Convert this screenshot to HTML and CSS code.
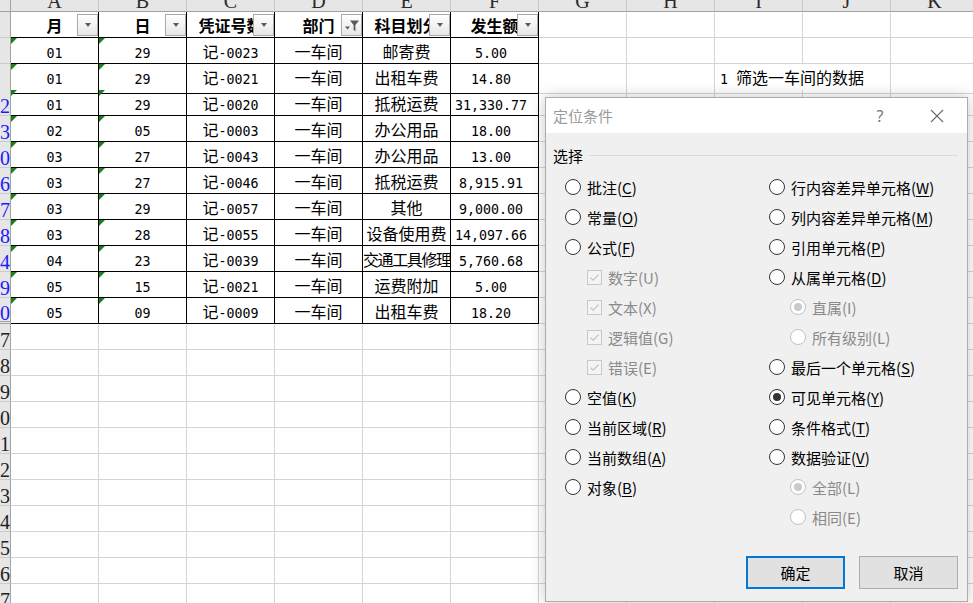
FILE: index.html
```html
<!DOCTYPE html>
<html lang="zh-CN">
<head>
<meta charset="utf-8">
<title>定位条件</title>
<link rel="stylesheet" href="styles.css">
</head>
<body>
<div class="sheet">
  <div class="row colhdr"><div></div><div>A</div><div>B</div><div>C</div><div>D</div><div>E</div><div>F</div><div>G</div><div>H</div><div>I</div><div>J</div><div>K</div></div>

  <div class="row"><div class="rh"></div>
    <div class="c t h">月<span class="dd"></span></div>
    <div class="c t h">日<span class="dd"></span></div>
    <div class="c t h">凭证号数<span class="dd"></span></div>
    <div class="c t h">部门<span class="dd f"><svg width="19" height="20" viewBox="0 0 19 20"><path d="M3 11.5h5l-2.5 3z" fill="#5a5a5a"/><path d="M8 5.5h9l-3.6 4.6v6.2l-1.8-1.3v-4.9z" fill="#5a5a5a"/></svg></span></div>
    <div class="c t h">科目划分<span class="dd"></span></div>
    <div class="c t h">发生额<span class="dd"></span></div>
    <div class="c"></div><div class="c"></div><div class="c"></div><div class="c"></div><div class="c"></div></div>

  <div class="row"><div class="rh"></div>
    <div class="c t g"><span class="n">01</span></div><div class="c t g"><span class="n">29</span></div><div class="c t">记<span class="n">-0023</span></div><div class="c t">一车间</div><div class="c t">邮寄费</div><div class="c t r"><span class="n">5.00</span></div>
    <div class="c"></div><div class="c"></div><div class="c"></div><div class="c"></div><div class="c"></div></div>

  <div class="row"><div class="rh"></div>
    <div class="c t g"><span class="n">01</span></div><div class="c t g"><span class="n">29</span></div><div class="c t">记<span class="n">-0021</span></div><div class="c t">一车间</div><div class="c t">出租车费</div><div class="c t r"><span class="n">14.80</span></div>
    <div class="c"></div><div class="c"></div><div class="c ov"><span class="n">1 </span>筛选一车间的数据</div><div class="c"></div><div class="c"></div></div>

  <div class="row"><div class="rh b">2</div>
    <div class="c t g"><span class="n">01</span></div><div class="c t g"><span class="n">29</span></div><div class="c t">记<span class="n">-0020</span></div><div class="c t">一车间</div><div class="c t">抵税运费</div><div class="c t r"><span class="n">31,330.77</span></div>
    <div class="c"></div><div class="c"></div><div class="c"></div><div class="c"></div><div class="c"></div></div>

  <div class="row"><div class="rh b">3</div>
    <div class="c t g"><span class="n">02</span></div><div class="c t g"><span class="n">05</span></div><div class="c t">记<span class="n">-0003</span></div><div class="c t">一车间</div><div class="c t">办公用品</div><div class="c t r"><span class="n">18.00</span></div>
    <div class="c"></div><div class="c"></div><div class="c"></div><div class="c"></div><div class="c"></div></div>

  <div class="row"><div class="rh b">0</div>
    <div class="c t g"><span class="n">03</span></div><div class="c t g"><span class="n">27</span></div><div class="c t">记<span class="n">-0043</span></div><div class="c t">一车间</div><div class="c t">办公用品</div><div class="c t r"><span class="n">13.00</span></div>
    <div class="c"></div><div class="c"></div><div class="c"></div><div class="c"></div><div class="c"></div></div>

  <div class="row"><div class="rh b">6</div>
    <div class="c t g"><span class="n">03</span></div><div class="c t g"><span class="n">27</span></div><div class="c t">记<span class="n">-0046</span></div><div class="c t">一车间</div><div class="c t">抵税运费</div><div class="c t r"><span class="n">8,915.91</span></div>
    <div class="c"></div><div class="c"></div><div class="c"></div><div class="c"></div><div class="c"></div></div>

  <div class="row"><div class="rh b">7</div>
    <div class="c t g"><span class="n">03</span></div><div class="c t g"><span class="n">29</span></div><div class="c t">记<span class="n">-0057</span></div><div class="c t">一车间</div><div class="c t">其他</div><div class="c t r"><span class="n">9,000.00</span></div>
    <div class="c"></div><div class="c"></div><div class="c"></div><div class="c"></div><div class="c"></div></div>

  <div class="row"><div class="rh b">8</div>
    <div class="c t g"><span class="n">03</span></div><div class="c t g"><span class="n">28</span></div><div class="c t">记<span class="n">-0055</span></div><div class="c t">一车间</div><div class="c t">设备使用费</div><div class="c t r"><span class="n">14,097.66</span></div>
    <div class="c"></div><div class="c"></div><div class="c"></div><div class="c"></div><div class="c"></div></div>

  <div class="row"><div class="rh b">4</div>
    <div class="c t g"><span class="n">04</span></div><div class="c t g"><span class="n">23</span></div><div class="c t">记<span class="n">-0039</span></div><div class="c t">一车间</div><div class="c t tight">交通工具修理</div><div class="c t r"><span class="n">5,760.68</span></div>
    <div class="c"></div><div class="c"></div><div class="c"></div><div class="c"></div><div class="c"></div></div>

  <div class="row"><div class="rh b">9</div>
    <div class="c t g"><span class="n">05</span></div><div class="c t g"><span class="n">15</span></div><div class="c t">记<span class="n">-0021</span></div><div class="c t">一车间</div><div class="c t">运费附加</div><div class="c t r"><span class="n">5.00</span></div>
    <div class="c"></div><div class="c"></div><div class="c"></div><div class="c"></div><div class="c"></div></div>

  <div class="row"><div class="rh b hid">0</div>
    <div class="c t g"><span class="n">05</span></div><div class="c t g"><span class="n">09</span></div><div class="c t">记<span class="n">-0009</span></div><div class="c t">一车间</div><div class="c t">出租车费</div><div class="c t r"><span class="n">18.20</span></div>
    <div class="c"></div><div class="c"></div><div class="c"></div><div class="c"></div><div class="c"></div></div>

  <div class="row"><div class="rh">7</div><div class="c"></div><div class="c"></div><div class="c"></div><div class="c"></div><div class="c"></div><div class="c"></div><div class="c"></div><div class="c"></div><div class="c"></div><div class="c"></div><div class="c"></div></div>
  <div class="row"><div class="rh">8</div><div class="c"></div><div class="c"></div><div class="c"></div><div class="c"></div><div class="c"></div><div class="c"></div><div class="c"></div><div class="c"></div><div class="c"></div><div class="c"></div><div class="c"></div></div>
  <div class="row"><div class="rh">9</div><div class="c"></div><div class="c"></div><div class="c"></div><div class="c"></div><div class="c"></div><div class="c"></div><div class="c"></div><div class="c"></div><div class="c"></div><div class="c"></div><div class="c"></div></div>
  <div class="row"><div class="rh">0</div><div class="c"></div><div class="c"></div><div class="c"></div><div class="c"></div><div class="c"></div><div class="c"></div><div class="c"></div><div class="c"></div><div class="c"></div><div class="c"></div><div class="c"></div></div>
  <div class="row"><div class="rh">1</div><div class="c"></div><div class="c"></div><div class="c"></div><div class="c"></div><div class="c"></div><div class="c"></div><div class="c"></div><div class="c"></div><div class="c"></div><div class="c"></div><div class="c"></div></div>
  <div class="row"><div class="rh">2</div><div class="c"></div><div class="c"></div><div class="c"></div><div class="c"></div><div class="c"></div><div class="c"></div><div class="c"></div><div class="c"></div><div class="c"></div><div class="c"></div><div class="c"></div></div>
  <div class="row"><div class="rh">3</div><div class="c"></div><div class="c"></div><div class="c"></div><div class="c"></div><div class="c"></div><div class="c"></div><div class="c"></div><div class="c"></div><div class="c"></div><div class="c"></div><div class="c"></div></div>
  <div class="row"><div class="rh">4</div><div class="c"></div><div class="c"></div><div class="c"></div><div class="c"></div><div class="c"></div><div class="c"></div><div class="c"></div><div class="c"></div><div class="c"></div><div class="c"></div><div class="c"></div></div>
  <div class="row"><div class="rh">5</div><div class="c"></div><div class="c"></div><div class="c"></div><div class="c"></div><div class="c"></div><div class="c"></div><div class="c"></div><div class="c"></div><div class="c"></div><div class="c"></div><div class="c"></div></div>
  <div class="row"><div class="rh">6</div><div class="c"></div><div class="c"></div><div class="c"></div><div class="c"></div><div class="c"></div><div class="c"></div><div class="c"></div><div class="c"></div><div class="c"></div><div class="c"></div><div class="c"></div></div>
  <div class="row"><div class="rh">7</div><div class="c"></div><div class="c"></div><div class="c"></div><div class="c"></div><div class="c"></div><div class="c"></div><div class="c"></div><div class="c"></div><div class="c"></div><div class="c"></div><div class="c"></div></div>
</div>

<div class="dlg">
  <div class="dlg-title">
    <span class="dlg-name">定位条件</span>
    <span class="q">?</span>
    <span class="x"><svg width="14" height="14" viewBox="0 0 14 14"><path d="M1 1L13 13M13 1L1 13" stroke="#6b6b6b" stroke-width="1.1"/></svg></span>
  </div>
  <div class="dlg-body">
    <div class="legend"><span>选择</span><i class="rule"></i></div>
    <div class="opts">
      <div class="col">
        <div class="opt"><i class="rd"></i><span>批注(<u>C</u>)</span></div>
        <div class="opt"><i class="rd"></i><span>常量(<u>O</u>)</span></div>
        <div class="opt"><i class="rd"></i><span>公式(<u>F</u>)</span></div>
        <div class="opt sub dis"><i class="cb"><svg width="13" height="13" viewBox="0 0 13 13"><path d="M2.5 6.6L5.2 9.2L10.6 3.6" stroke="#c3c3c3" stroke-width="1.3" fill="none"/></svg></i><span>数字(U)</span></div>
        <div class="opt sub dis"><i class="cb"><svg width="13" height="13" viewBox="0 0 13 13"><path d="M2.5 6.6L5.2 9.2L10.6 3.6" stroke="#c3c3c3" stroke-width="1.3" fill="none"/></svg></i><span>文本(X)</span></div>
        <div class="opt sub dis"><i class="cb"><svg width="13" height="13" viewBox="0 0 13 13"><path d="M2.5 6.6L5.2 9.2L10.6 3.6" stroke="#c3c3c3" stroke-width="1.3" fill="none"/></svg></i><span>逻辑值(G)</span></div>
        <div class="opt sub dis"><i class="cb"><svg width="13" height="13" viewBox="0 0 13 13"><path d="M2.5 6.6L5.2 9.2L10.6 3.6" stroke="#c3c3c3" stroke-width="1.3" fill="none"/></svg></i><span>错误(E)</span></div>
        <div class="opt"><i class="rd"></i><span>空值(<u>K</u>)</span></div>
        <div class="opt"><i class="rd"></i><span>当前区域(<u>R</u>)</span></div>
        <div class="opt"><i class="rd"></i><span>当前数组(<u>A</u>)</span></div>
        <div class="opt"><i class="rd"></i><span>对象(<u>B</u>)</span></div>
      </div>
      <div class="col">
        <div class="opt"><i class="rd"></i><span>行内容差异单元格(<u>W</u>)</span></div>
        <div class="opt"><i class="rd"></i><span>列内容差异单元格(<u>M</u>)</span></div>
        <div class="opt"><i class="rd"></i><span>引用单元格(<u>P</u>)</span></div>
        <div class="opt"><i class="rd"></i><span>从属单元格(<u>D</u>)</span></div>
        <div class="opt sub2 dis"><i class="rd on"></i><span>直属(I)</span></div>
        <div class="opt sub2 dis"><i class="rd"></i><span>所有级别(L)</span></div>
        <div class="opt"><i class="rd"></i><span>最后一个单元格(<u>S</u>)</span></div>
        <div class="opt"><i class="rd on"></i><span>可见单元格(<u>Y</u>)</span></div>
        <div class="opt"><i class="rd"></i><span>条件格式(<u>T</u>)</span></div>
        <div class="opt"><i class="rd"></i><span>数据验证(<u>V</u>)</span></div>
        <div class="opt sub2 dis"><i class="rd on"></i><span>全部(L)</span></div>
        <div class="opt sub2 dis"><i class="rd"></i><span>相同(E)</span></div>
      </div>
    </div>
    <div class="btns">
      <div class="btn def">确定</div>
      <div class="btn">取消</div>
    </div>
  </div>
</div>
</body>
</html>
```

FILE: styles.css
```css
* { box-sizing: border-box; }
html, body { margin: 0; padding: 0; }
body {
  width: 973px;
  height: 603px;
  overflow: hidden;
  position: relative;
  background: #fff;
  font-family: "Noto Sans CJK SC", sans-serif;
  color: #000;
}

/* ---------- sheet ---------- */
.sheet { display: flex; flex-direction: column; }
.row {
  display: grid;
  grid-template-columns: 11px repeat(11, 88px);
  height: 26px;
}
.row.colhdr { height: 12px; }
.colhdr > div {
  background: #e6e6e6;
  border-right: 1px solid #c8c8c8;
  border-bottom: 1px solid #a3a3a3;
  font: 20px "Liberation Serif", serif;
  line-height: 3px;
  text-align: center;
  color: #2a2a2a;
  overflow: hidden;
}
.colhdr > div:first-child { border-right-color: #a3a3a3; }

.rh {
  background: #e6e6e6;
  border-right: 1px solid #a3a3a3;
  border-bottom: 1px solid #cbcbcb;
  font: 20px "Liberation Serif", serif;
  line-height: 32px;
  text-align: right;
  padding-right: 2px;
  overflow: hidden;
  white-space: nowrap;
  color: #222;
}
.rh.b { color: #1a1aff; }
.rh.hid { border-bottom: 3px double #a3a3a3; line-height: 30px; }

.c {
  position: relative;
  border-right: 1px solid #d4d4d4;
  border-bottom: 1px solid #d4d4d4;
  font-size: 16px;
  line-height: 26px;
  text-align: center;
  white-space: nowrap;
  overflow: hidden;
}
.c.t { border-color: #000; }
.c.h { font-weight: 700; }
.c.r { padding-right: 7px; }
.c.tight { letter-spacing: -1.4px; }
.c.g::before {
  content: "";
  position: absolute;
  left: 0;
  top: 0;
  border-top: 6px solid #1d7d1d;
  border-right: 6px solid transparent;
}
.c.ov {
  overflow: visible;
  text-align: left;
  padding-left: 5px;
  border-right-color: transparent;
}
.n {
  font-family: "DejaVu Sans Mono", monospace;
  font-size: 13.3px;
}

.dd {
  position: absolute;
  right: 0;
  bottom: 1px;
  width: 21px;
  height: 22px;
  border: 1px solid #a9a9a9;
  background: linear-gradient(#ffffff, #e7e7e7);
  display: flex;
  align-items: center;
  justify-content: center;
}
.dd::after {
  content: "";
  border-left: 3.5px solid transparent;
  border-right: 3.5px solid transparent;
  border-top: 4px solid #5a5a5a;
}
.dd.f::after { display: none; }
.dd svg { display: block; }

/* ---------- dialog ---------- */
.dlg {
  position: absolute;
  left: 545px;
  top: 97px;
  width: 423px;
  height: 505px;
  background: #f0f0f0;
  border: 1px solid #acacac;
  box-shadow: 0 0 14px rgba(0, 0, 0, 0.22);
  display: flex;
  flex-direction: column;
  font-size: 15px;
}
.dlg-title {
  height: 35px;
  flex: none;
  background: #fff;
  display: flex;
  align-items: center;
  padding: 0 20px 0 7px;
  color: #9a9a9a;
}
.dlg-name { flex: 1; }
.q {
  width: 20px;
  text-align: center;
  color: #777;
  font-family: "Noto Sans", sans-serif;
  font-size: 16px;
}
.x {
  width: 20px;
  margin-left: 37px;
  display: flex;
  justify-content: center;
}
.x svg { display: block; }

.dlg-body {
  flex: 1;
  display: flex;
  flex-direction: column;
  padding: 12px 0 0 7px;
}
.legend {
  height: 20px;
  display: flex;
  align-items: center;
}
.rule {
  flex: 1;
  height: 1px;
  background: #dadada;
  margin: 0 9px 0 6px;
}
.opts {
  margin-top: 7px;
  padding-left: 12px;
  display: grid;
  grid-template-columns: 204px 1fr;
}
.col { display: flex; flex-direction: column; }
.opt {
  height: 30px;
  display: flex;
  align-items: center;
  gap: 6px;
  white-space: nowrap;
}
.opt u { text-decoration-thickness: 1px; text-underline-offset: 2px; }
.opt.sub { padding-left: 22px; }
.opt.sub2 { padding-left: 21px; }
.opt.dis { color: #8a8a8a; }

.rd {
  width: 16px;
  height: 16px;
  flex: none;
  border-radius: 50%;
  border: 1px solid #333;
  background: #fff;
  display: flex;
  align-items: center;
  justify-content: center;
}
.rd.on::after {
  content: "";
  width: 8px;
  height: 8px;
  border-radius: 50%;
  background: #333;
}
.dis .rd { border-color: #c2c2c2; }
.dis .rd.on::after { background: #cacaca; }

.cb {
  width: 15px;
  height: 15px;
  flex: none;
  border: 1px solid #c8c8c8;
  background: #f4f4f4;
  display: flex;
  align-items: center;
  justify-content: center;
}
.cb svg { display: block; }

.btns {
  margin-top: auto;
  display: flex;
  justify-content: flex-end;
  gap: 14px;
  padding: 0 9px 12px 0;
}
.btn {
  width: 99px;
  height: 33px;
  border: 1px solid #adadad;
  background: #e1e1e1;
  display: flex;
  align-items: center;
  justify-content: center;
  font-size: 15px;
}
.btn.def { border: 2px solid #0078d7; }
```
